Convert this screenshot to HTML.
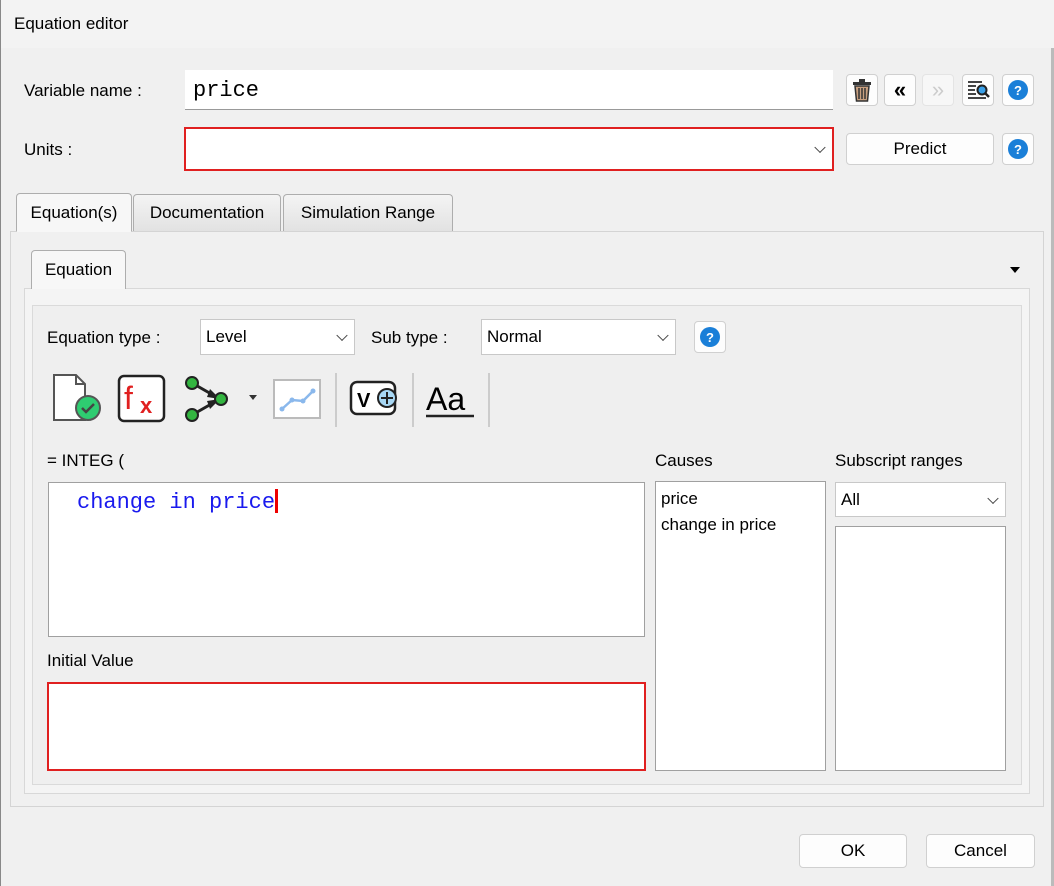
<!DOCTYPE html>
<html><head><style>
*{box-sizing:border-box}
body{margin:0;width:1054px;height:886px;background:#f0f0f0;font-family:"Liberation Sans",sans-serif;font-size:17px;color:#000;position:relative;overflow:hidden}
.a{position:absolute}
.btn{position:absolute;background:#fdfdfd;border:1px solid #d0d0d0;border-radius:4px;display:flex;align-items:center;justify-content:center}
.help{width:20px;height:20px;border-radius:50%;background:#1a7fd8;color:#fff;font-weight:bold;font-size:13px;display:flex;align-items:center;justify-content:center}
.box{position:absolute;background:#fff;border:1px solid #a0a0a0}
.combo{position:absolute;background:#fff;border:1px solid #c8c8c8;padding-left:5px;display:flex;align-items:center}
.chev{position:absolute;right:8px;top:50%;width:8px;height:8px;border-right:1.5px solid #444;border-bottom:1.5px solid #444;transform:translateY(-70%) rotate(45deg)}
.tab{position:absolute;border:1px solid #adadad;border-bottom:none;border-radius:4px 4px 0 0;background:linear-gradient(#f4f4f4,#e2e2e2);display:flex;align-items:center;justify-content:center}
</style></head><body>
<div class="a" style="left:0;top:0;width:1054px;height:48px;background:#f3f3f3"></div>
<div class="a" style="left:14px;top:14px">Equation editor</div>
<div class="a" style="left:0;top:0;width:1px;height:886px;background:#888"></div>
<div class="a" style="left:1051px;top:48px;width:3px;height:838px;background:#bbb"></div>

<div class="a" style="left:24px;top:81px">Variable name :</div>
<div class="a" style="left:185px;top:70px;width:648px;height:40px;background:#fff;border-bottom:1px solid #999;font-family:'Liberation Mono',monospace;font-size:22px;padding:8px 0 0 8px">price</div>
<div class="btn" style="left:846px;top:74px;width:32px;height:32px"><svg width="22" height="24" viewBox="0 0 22 24"><rect x="2" y="4" width="18" height="3" fill="#333"/><rect x="8" y="1" width="6" height="3" fill="#333"/><path d="M4 8h14l-1.5 15h-11z" fill="#c9a080" stroke="#333" stroke-width="1.5"/><path d="M8 10v11M11 10v11M14 10v11" stroke="#333" stroke-width="1.5"/></svg></div>
<div class="btn" style="left:884px;top:74px;width:32px;height:32px;font-size:22px;font-weight:bold">«</div>
<div class="btn" style="left:922px;top:74px;width:32px;height:32px;font-size:22px;color:#ccc;background:#f7f7f7;border-color:#e4e4e4">»</div>
<div class="btn" style="left:962px;top:74px;width:32px;height:32px"><svg width="24" height="22" viewBox="0 0 24 22"><path d="M2 3h14M2 7h8M2 11h7M2 15h8M2 19h18" stroke="#444" stroke-width="2"/><circle cx="16" cy="11" r="4.5" fill="#3aa0e8" stroke="#222" stroke-width="2"/><path d="M19 14l4 4" stroke="#222" stroke-width="2.5"/></svg></div>
<div class="btn" style="left:1002px;top:74px;width:32px;height:32px"><div class="help">?</div></div>

<div class="a" style="left:24px;top:140px">Units :</div>
<div class="a" style="left:184px;top:127px;width:650px;height:44px;background:#fff;border:2px solid #e02020"><div class="chev"></div></div>
<div class="btn" style="left:846px;top:133px;width:148px;height:32px">Predict</div>
<div class="btn" style="left:1002px;top:133px;width:32px;height:32px"><div class="help">?</div></div>

<div class="a" style="left:10px;top:231px;width:1034px;height:576px;border:1px solid #d4d4d4;background:#f0f0f0"></div>
<div class="tab" style="left:16px;top:193px;width:116px;height:39px;background:#f7f7f7;z-index:2;border-bottom:1px solid #f7f7f7">Equation(s)</div>
<div class="tab" style="left:133px;top:194px;width:148px;height:37px">Documentation</div>
<div class="tab" style="left:283px;top:194px;width:170px;height:37px">Simulation Range</div>

<div class="a" style="left:24px;top:288px;width:1006px;height:506px;border:1px solid #d8d8d8;background:#f4f4f4"></div>
<div class="tab" style="left:31px;top:250px;width:95px;height:39px;background:#f7f7f7;z-index:2">Equation</div>
<div class="a" style="left:1010px;top:267px;width:0;height:0;border-left:5px solid transparent;border-right:5px solid transparent;border-top:6px solid #000"></div>
<div class="a" style="left:32px;top:305px;width:990px;height:480px;border:1px solid #dadada;background:#efefef"></div>

<div class="a" style="left:47px;top:328px">Equation type :</div>
<div class="combo" style="left:200px;top:319px;width:155px;height:36px">Level<div class="chev"></div></div>
<div class="a" style="left:371px;top:328px">Sub type :</div>
<div class="combo" style="left:481px;top:319px;width:195px;height:36px">Normal<div class="chev"></div></div>
<div class="btn" style="left:694px;top:321px;width:32px;height:32px"><div class="help">?</div></div>

<svg class="a" style="left:40px;top:365px" width="460" height="65" viewBox="0 0 460 65">
<path d="M14 10h22l9 9v36H14z" fill="#fff" stroke="#555" stroke-width="2"/><path d="M36 10v9h9" fill="none" stroke="#555" stroke-width="2"/>
<circle cx="48" cy="43" r="12" fill="#2ecc71" stroke="#555" stroke-width="2"/><path d="M42 43l4 4 8-8" fill="none" stroke="#444" stroke-width="2.5"/>
<rect x="79" y="11" width="45" height="45" rx="5" fill="#fff" stroke="#222" stroke-width="2.5"/>
<text x="84" y="44" font-family="Liberation Sans" font-size="32" fill="#e02020">f</text><text x="100" y="48" font-family="Liberation Sans" font-size="22" font-weight="bold" fill="#e02020">x</text>
<path d="M152 18l28 16M152 50l28-16" stroke="#222" stroke-width="3"/>
<path d="M170 24l10 10-13-2z M170 44l10-10-13 2z" fill="#222"/>
<circle cx="152" cy="18" r="6" fill="#33b540" stroke="#222" stroke-width="2"/><circle cx="152" cy="50" r="6" fill="#33b540" stroke="#222" stroke-width="2"/><circle cx="181" cy="34" r="6" fill="#33b540" stroke="#222" stroke-width="2"/>
<path d="M209 30h8l-4 5z" fill="#333"/>
<rect x="234" y="15" width="46" height="38" fill="#fff" stroke="#bbb" stroke-width="2"/><path d="M242 44l10-9 11 1 10-10" fill="none" stroke="#8ab8ec" stroke-width="2.5"/><circle cx="242" cy="44" r="2.5" fill="#8ab8ec"/><circle cx="252" cy="35" r="2.5" fill="#8ab8ec"/><circle cx="263" cy="36" r="2.5" fill="#8ab8ec"/><circle cx="273" cy="26" r="2.5" fill="#8ab8ec"/>
<line x1="296" y1="8" x2="296" y2="62" stroke="#aaa"/>
<rect x="311" y="17" width="44" height="32" rx="6" fill="#fff" stroke="#222" stroke-width="2.5"/><text x="317" y="42" font-family="Liberation Sans" font-size="20" font-weight="bold">V</text>
<circle cx="347" cy="33" r="9" fill="#a8d8f5" stroke="#222" stroke-width="2"/><path d="M347 27v12M341 33h12" stroke="#222" stroke-width="2"/>
<line x1="373" y1="8" x2="373" y2="62" stroke="#aaa"/>
<text x="386" y="45" font-family="Liberation Sans" font-size="32">Aa</text><line x1="386" y1="51" x2="434" y2="51" stroke="#222" stroke-width="2.5"/>
<line x1="449" y1="8" x2="449" y2="62" stroke="#aaa"/>
</svg>

<div class="a" style="left:47px;top:451px">= INTEG (</div>
<div class="box" style="left:48px;top:482px;width:597px;height:155px;font-family:'Liberation Mono',monospace;font-size:22px;color:#1a1aee;padding:6px 0 0 28px">change in price<span style="display:inline-block;width:3px;height:24px;background:#e00;vertical-align:-5px"></span></div>
<div class="a" style="left:47px;top:651px">Initial Value</div>
<div class="a" style="left:47px;top:682px;width:599px;height:89px;background:#fff;border:2px solid #e02020"></div>

<div class="a" style="left:655px;top:451px">Causes</div>
<div class="box" style="left:655px;top:481px;width:171px;height:290px;padding:4px 0 0 5px;line-height:26px">price<br>change in price</div>
<div class="a" style="left:835px;top:451px">Subscript ranges</div>
<div class="combo" style="left:835px;top:482px;width:171px;height:35px">All<div class="chev"></div></div>
<div class="box" style="left:835px;top:526px;width:171px;height:245px"></div>

<div class="btn" style="left:799px;top:834px;width:108px;height:34px">OK</div>
<div class="btn" style="left:926px;top:834px;width:109px;height:34px">Cancel</div>
</body></html>
